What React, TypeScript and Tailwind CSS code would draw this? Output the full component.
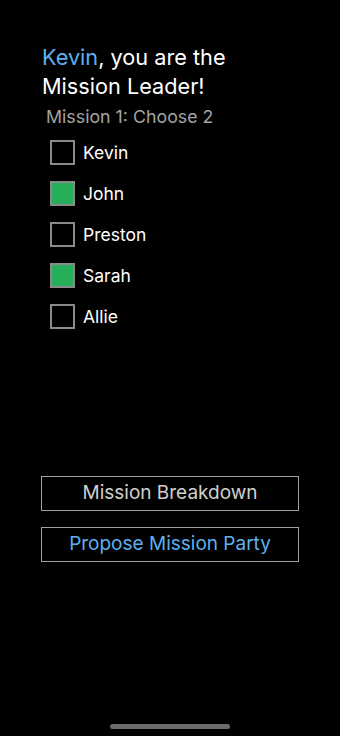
import React from "react";

const players = [
  { name: "Kevin", checked: false },
  { name: "John", checked: true },
  { name: "Preston", checked: false },
  { name: "Sarah", checked: true },
  { name: "Allie", checked: false },
];

export default function App() {
  return (
    <div
      className="w-[340px] h-[736px] bg-black flex flex-col overflow-hidden"
      style={{ fontFamily: "Inter, 'Noto Sans', sans-serif" }}
    >
      <div className="pt-[43px] pl-[42px] text-[21.7px] leading-[29px] text-white">
        <div>
          <span className="text-[#5eb0ee]">Kevin</span>, you are the
        </div>
        <div>Mission Leader!</div>
      </div>
      <div className="mt-[4px] pl-[46px] text-[17.8px] leading-[24px] text-[#a3a3a3]">
        Mission 1: Choose 2
      </div>
      <div className="mt-[3px] pl-[50px] flex flex-col">
        {players.map((p) => (
          <div key={p.name} className="h-[41px] flex items-center">
            <div
              className={
                p.checked
                  ? "w-[25px] h-[25px] border-2 border-[#8a8a8a] bg-[#27ae5a]"
                  : "w-[25px] h-[25px] border-2 border-[#8a8a8a] bg-black"
              }
            />
            <span className="ml-[8px] text-[17.5px] leading-[24px] pt-[1px] text-white">{p.name}</span>
          </div>
        ))}
      </div>
      <div className="mt-[139px] px-[41px] flex flex-col gap-[16px]">
        <div className="h-[35px] border-[1.5px] border-[#a0a0a0] flex items-center justify-center text-[19px] text-[#d0d0d0]">
          Mission Breakdown
        </div>
        <div className="h-[35px] border-[1.5px] border-[#a0a0a0] flex items-center justify-center text-[19px] text-[#5eb0ee]">
          Propose Mission Party
        </div>
      </div>
      <div className="mt-auto mb-[7px] flex justify-center">
        <div className="w-[120px] h-[5px] rounded-full bg-[#6b6b6b]" />
      </div>
    </div>
  );
}
